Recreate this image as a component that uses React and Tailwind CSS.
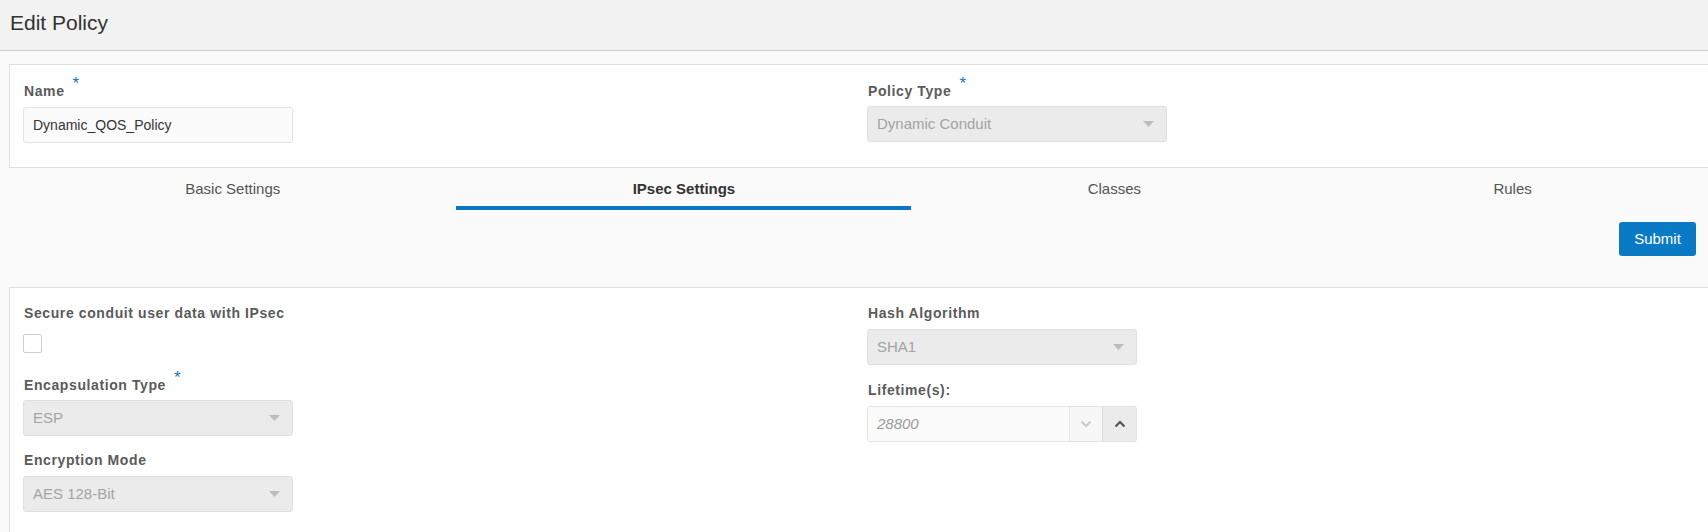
import React from "react";

function Req() {
  return <span className="ml-[8px] relative -top-[7px] text-[17px] leading-none text-[#1877bd] font-normal">*</span>;
}

function Label({ children, req, className = "" }) {
  return (
    <div className={`h-4 leading-4 text-[14px] font-bold text-[#5b5b5b] tracking-[0.6px] whitespace-nowrap ${className}`}>
      {children}
      {req && <Req />}
    </div>
  );
}

function Select({ value, width = "w-[270px]", className = "" }) {
  return (
    <div className={`${width} h-[36px] flex items-center justify-between bg-[#ebebeb] border border-[#e0e0e0] rounded-[3px] pl-[9px] pr-[12px] ${className}`}>
      <span className="text-[15px] text-[#a3a3a3]">{value}</span>
      <svg width="11" height="6" viewBox="0 0 11 6">
        <path d="M0 0 L11 0 L5.5 6 Z" fill="#bdbdbd" />
      </svg>
    </div>
  );
}

export default function App() {
  const tabs = ["Basic Settings", "IPsec Settings", "Classes", "Rules"];
  const active = "IPsec Settings";

  return (
    <div className="h-screen flex flex-col bg-[#fafafa] font-['Liberation_Sans',Arial,sans-serif] overflow-hidden">
      <div className="h-[51px] shrink-0 bg-[#f2f2f2] border-b border-[#cfcfcf] flex items-center pl-[10px]">
        <h1 className="text-[21px] text-[#333] -mt-[4px]">Edit Policy</h1>
      </div>

      <div className="flex-1 flex flex-col pl-[9px] pt-[13px]">
        {/* name / policy type card */}
        <div className="bg-white border border-r-0 border-[#e0e0e0] flex pt-[17px] pb-[24px]">
          <div className="w-[857px] pl-[13px]">
            <Label req className="pl-[1px]">Name</Label>
            <div className="mt-[9px] w-[270px] h-[36px] flex items-center bg-[#fbfbfb] border border-[#e3e3e3] rounded-[3px] pl-[9px] text-[14px] text-[#333]">
              Dynamic_QOS_Policy
            </div>
          </div>
          <div>
            <Label req className="pl-[1px]">Policy Type</Label>
            <Select value="Dynamic Conduit" width="w-[300px]" className="mt-[8px]" />
          </div>
        </div>

        {/* tabs */}
        <div className="flex">
          {tabs.map((t) => (
            <div
              key={t}
              className={`flex-auto text-center pt-[13px] pb-[9px] leading-4 text-[15px] border-b-4 ${
                t === active ? "border-[#0a78c4] font-bold text-[#333]" : "border-transparent text-[#555]"
              }`}
            >
              {t}
            </div>
          ))}
        </div>

        <div className="flex justify-end pr-[12px] pt-[12px] pb-[31px]">
          <button className="h-[34px] w-[77px] bg-[#0a7ac5] rounded-[3px] text-white text-[15px]">Submit</button>
        </div>

        {/* ipsec settings card */}
        <div className="flex-1 bg-white border border-r-0 border-b-0 border-[#e0e0e0] flex pt-[17px]">
          <div className="w-[857px] pl-[13px]">
            <Label className="pl-[1px]">Secure conduit user data with IPsec</Label>
            <div className="mt-[13px] w-[19px] h-[19px] bg-white border border-[#cfcfcf] rounded-[2px]" />
            <Label req className="mt-[23px] pl-[1px]">Encapsulation Type</Label>
            <Select value="ESP" className="mt-[8px]" />
            <Label className="mt-[16px] pl-[1px]">Encryption Mode</Label>
            <Select value="AES 128-Bit" className="mt-[8px]" />
          </div>
          <div>
            <Label className="pl-[1px]">Hash Algorithm</Label>
            <Select value="SHA1" className="mt-[8px]" />
            <Label className="mt-[17px] pl-[1px]">Lifetime(s):</Label>
            <div className="mt-[8px] w-[270px] h-[36px] flex bg-[#fbfbfb] border border-[#e3e3e3] rounded-[3px] overflow-hidden">
              <div className="flex-1 flex items-center pl-[9px] text-[15px] italic text-[#9a9a9a]">28800</div>
              <div className="w-[33px] flex items-center justify-center border-l border-[#e6e6e6] bg-[#f7f7f7]">
                <svg width="12" height="8" viewBox="0 0 12 8">
                  <path d="M1.5 1.5 L6 6 L10.5 1.5" fill="none" stroke="#cccccc" strokeWidth="2.2" />
                </svg>
              </div>
              <div className="w-[34px] flex items-center justify-center border-l border-[#dadada] bg-[#ebebeb]">
                <svg width="12" height="8" viewBox="0 0 12 8">
                  <path d="M1.5 6.5 L6 2 L10.5 6.5" fill="none" stroke="#555555" strokeWidth="2.2" />
                </svg>
              </div>
            </div>
          </div>
        </div>
      </div>
    </div>
  );
}
